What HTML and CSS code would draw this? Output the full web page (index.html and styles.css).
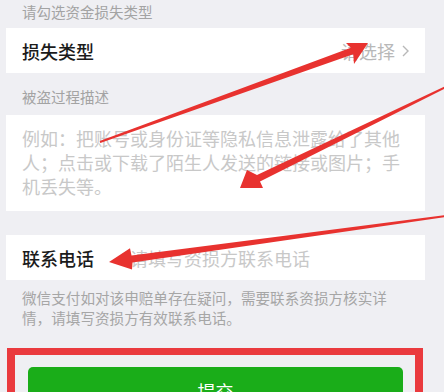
FILE: index.html
```html
<!DOCTYPE html>
<html lang="zh-CN">
<head>
<meta charset="utf-8">
<title>资损申赔</title>
<link rel="stylesheet" href="styles.css">
</head>
<body>
<div class="page">
  <div class="label first">请勾选资金损失类型</div>
  <div class="panel row">
    <span class="row-title">损失类型</span>
    <span class="picker">请选择<svg class="chev" width="7" height="12" viewBox="0 0 7 12"><polyline points="1,1 6,6 1,11" fill="none" stroke="#b8b8b8" stroke-width="1.4"/></svg></span>
  </div>
  <div class="label second">被盗过程描述</div>
  <div class="panel desc">例如：把账号或身份证等隐私信息泄露给了其他<br>人；点击或下载了陌生人发送的链接或图片；手<br>机丢失等。</div>
  <div class="panel row phone">
    <span class="row-title fixed">联系电话</span>
    <span class="placeholder">请填写资损方联系电话</span>
  </div>
  <div class="help">微信支付如对该申赔单存在疑问，需要联系资损方核实详<br>情，请填写资损方有效联系电话。</div>
  <div class="highlight">
    <div class="submit">提交</div>
  </div>
</div>
<svg class="arrows" width="444" height="392" viewBox="0 0 444 392">
  <polygon fill="#e8322f" points="99.7,141.1 350.8,47.7 346,43 368,43 354,64 353.2,54.3 100.3,142.9"/>
  <polygon fill="#e8322f" points="445.6,86.1 257,175 247,170 240,188 263,188 260,181.5 446.4,87.9"/>
  <polygon fill="#e8322f" points="445.9,215 131.5,255.5 130,248.3 109,262 132,269.5 132.5,262.5 446.1,217"/>
</svg>
</body>
</html>
```
FILE: styles.css
```css
html, body {
  margin: 0;
  padding: 0;
}
body {
  background: #efeff3;
  font-family: "Noto Sans CJK SC", "Noto Sans", sans-serif;
  width: 444px;
  height: 392px;
  overflow: hidden;
  position: relative;
}
.page {
  padding-left: 6px;
  width: 419px;
}
.label {
  font-size: 14.5px;
  line-height: 24px;
  color: #a3a3a3;
  padding: 0 16px;
}
.label.first {
  padding-bottom: 4px;
}
.label.second {
  padding-top: 12px;
  padding-bottom: 6px;
}
.panel {
  background: #ffffff;
}
.row {
  height: 45px;
  display: flex;
  align-items: center;
  padding: 0 16px;
}
.row-title {
  font-size: 18px;
  font-weight: 500;
  color: #1b1b1b;
}
.row-title.fixed {
  width: 108px;
  flex: none;
}
.picker {
  margin-left: auto;
  font-size: 18px;
  color: #b8b8b8;
  display: flex;
  align-items: center;
  gap: 7px;
}
.chev {
  display: block;
}
.desc {
  font-size: 18px;
  line-height: 24px;
  color: #c8c8c8;
  padding: 11px 16px 13px;
}
.phone {
  margin-top: 24px;
}
.placeholder {
  font-size: 18px;
  color: #c8c8c8;
}
.help {
  font-size: 14.6px;
  line-height: 19.5px;
  color: #a6a6a6;
  padding: 8px 16px 0;
}
.highlight {
  margin: 21px 2px 0 1px;
  border: 8px solid #ea3a3e;
  border-top-width: 7px;
  padding: 12px 12px 0 13px;
  height: 60px;
  box-sizing: border-box;
}
.submit {
  background: #1aad19;
  border-radius: 5px;
  height: 47px;
  display: flex;
  align-items: center;
  justify-content: center;
  color: #ffffff;
  font-size: 18px;
}
.arrows {
  position: absolute;
  left: 0;
  top: 0;
  pointer-events: none;
}
```
